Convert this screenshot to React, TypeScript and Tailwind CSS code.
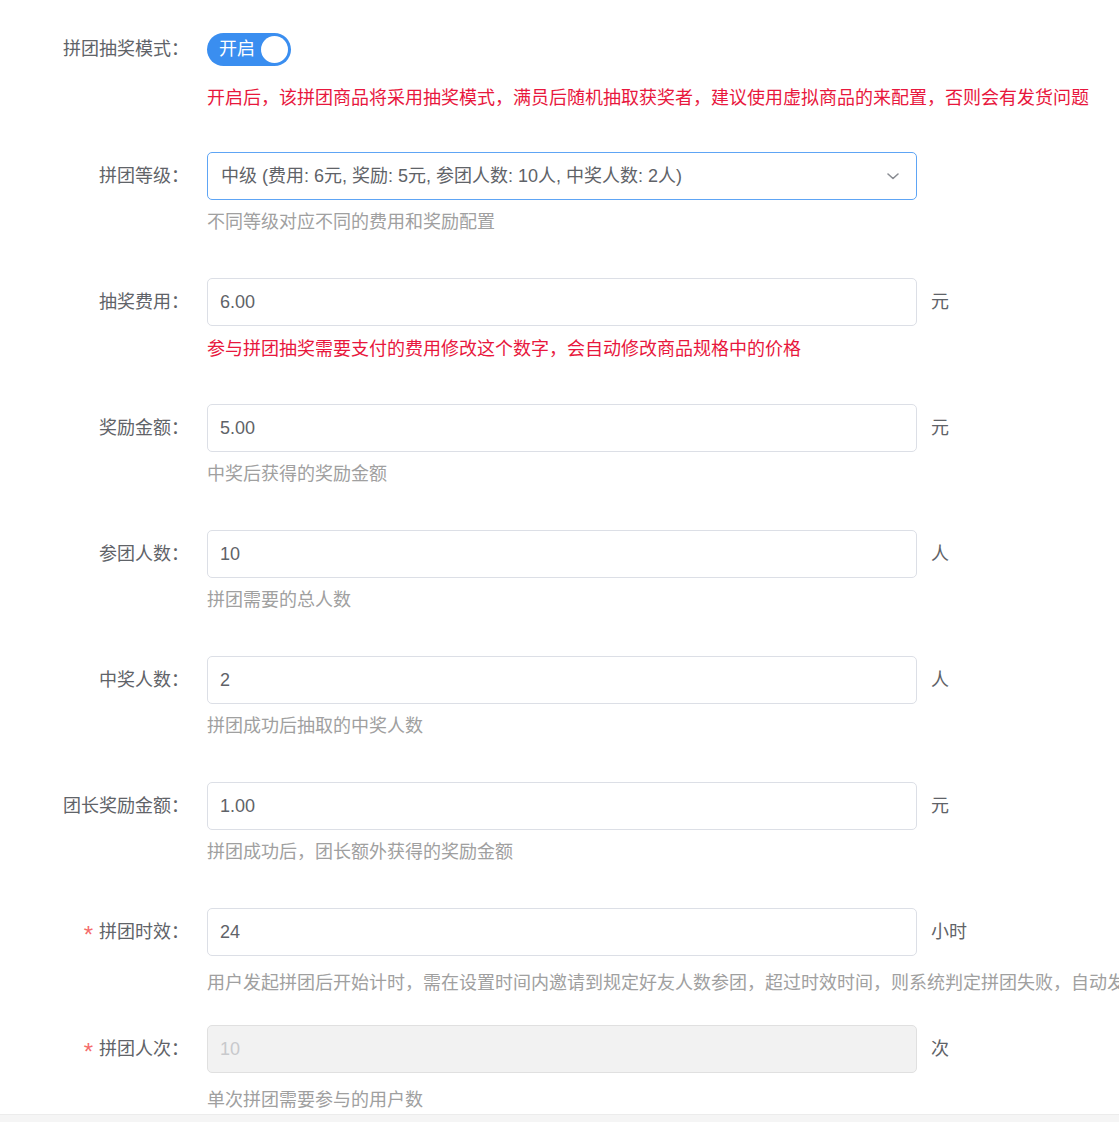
import React from "react";

const font = { fontFamily: '"Liberation Sans", "Noto Sans CJK SC", sans-serif' };

function Label({ text, required }: { text: string; required?: boolean }) {
  return (
    <div className="w-[189px] shrink-0 h-[48px] flex items-center justify-end text-[18px] text-[#5f6368]">
      {required && <span className="text-[#f56c6c] mr-[6px] text-[24px] leading-none mt-[5px]">*</span>}
      <span>{text}：</span>
    </div>
  );
}

function InputRow({
  label,
  value,
  unit,
  help,
  red,
  required,
  disabled,
}: {
  label: string;
  value: string;
  unit: string;
  help: string;
  red?: boolean;
  required?: boolean;
  disabled?: boolean;
}) {
  return (
    <div className={required ? "mb-[30px]" : red ? "mb-[43px]" : "mb-[44px]"}>
      <div className="flex items-start">
        <Label text={label} required={required} />
        <div className="ml-[18px] flex flex-col">
          <div className="flex items-center">
            <div
              className={
                "w-[710px] h-[48px] rounded-[5px] border flex items-center px-[12px] text-[18px] " +
                (disabled
                  ? "bg-[#f2f2f2] border-[#e0e0e0] text-[#c8c9cc]"
                  : "bg-white border-[#dcdfe6] text-[#5f6368]")
              }
            >
              {value}
            </div>
            <span className="ml-[14px] text-[18px] text-[#5f6368]">{unit}</span>
          </div>
          <div
            className={
              (required ? "mt-[15px] " : red ? "mt-[11px] " : "mt-[10px] ") +
              "leading-[24px] text-[18px] whitespace-nowrap " +
              (red ? "text-[#e8173d]" : "text-[#a0a0a0]")
            }
          >
            {help}
          </div>
        </div>
      </div>
    </div>
  );
}

export default function App() {
  return (
    <div className="w-[1119px] h-[1122px] overflow-hidden bg-white flex flex-col" style={font}>
      <div className="flex-1 overflow-hidden pt-[25px]">
        <div className="mb-[42px]">
          <div className="flex items-start">
            <Label text="拼团抽奖模式" />
            <div className="ml-[18px] flex flex-col">
              <div className="h-[48px] flex items-center">
                <div className="w-[84px] h-[33px] rounded-full bg-[#3a8ef0] flex items-center justify-between pl-[12px] pr-[3px]">
                  <span className="text-white text-[18px] leading-none">开启</span>
                  <span className="w-[27px] h-[27px] rounded-full bg-white block" />
                </div>
              </div>
              <div className="mt-[13px] leading-[24px] text-[18px] text-[#e8173d] whitespace-nowrap">
                开启后，该拼团商品将采用抽奖模式，满员后随机抽取获奖者，建议使用虚拟商品的来配置，否则会有发货问题
              </div>
            </div>
          </div>
        </div>

        <div className="mb-[44px]">
          <div className="flex items-start">
            <Label text="拼团等级" />
            <div className="ml-[18px] flex flex-col">
              <div className="w-[710px] h-[48px] rounded-[5px] border border-[#5ea5f5] bg-white flex items-center justify-between pl-[13px] pr-[16px] text-[18px] text-[#5f6368]">
                <span>中级 (费用: 6元, 奖励: 5元, 参团人数: 10人, 中奖人数: 2人)</span>
                <svg width="14" height="14" viewBox="0 0 14 14" fill="none">
                  <path d="M2 5l5 4.5L12 5" stroke="#8a8d93" strokeWidth="1.6" strokeLinecap="round" strokeLinejoin="round" />
                </svg>
              </div>
              <div className="mt-[10px] leading-[24px] text-[18px] text-[#a0a0a0] whitespace-nowrap">
                不同等级对应不同的费用和奖励配置
              </div>
            </div>
          </div>
        </div>

        <InputRow label="抽奖费用" value="6.00" unit="元" red help="参与拼团抽奖需要支付的费用修改这个数字，会自动修改商品规格中的价格" />
        <InputRow label="奖励金额" value="5.00" unit="元" help="中奖后获得的奖励金额" />
        <InputRow label="参团人数" value="10" unit="人" help="拼团需要的总人数" />
        <InputRow label="中奖人数" value="2" unit="人" help="拼团成功后抽取的中奖人数" />
        <InputRow label="团长奖励金额" value="1.00" unit="元" help="拼团成功后，团长额外获得的奖励金额" />
        <InputRow
          label="拼团时效"
          value="24"
          unit="小时"
          required
          help="用户发起拼团后开始计时，需在设置时间内邀请到规定好友人数参团，超过时效时间，则系统判定拼团失败，自动发起退款"
        />
        <InputRow label="拼团人次" value="10" unit="次" required disabled help="单次拼团需要参与的用户数" />
      </div>
      <div className="h-[8px] shrink-0 bg-[#f5f5f5] border-t border-[#ececec]" />
    </div>
  );
}
